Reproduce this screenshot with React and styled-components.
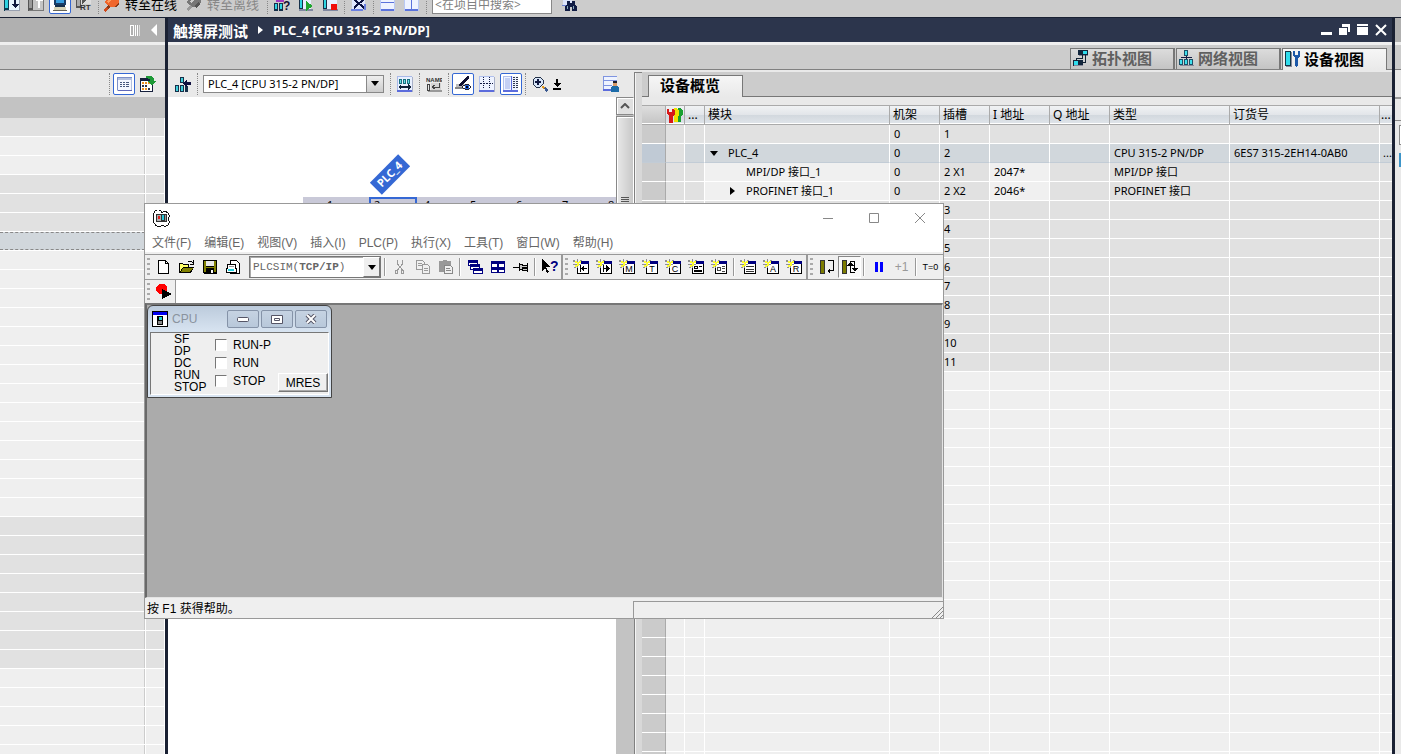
import React from 'react';
import styled, { createGlobalStyle, css } from 'styled-components';

// [fill, path, stroke]
const icons = {
  download: [
    ['#0a3c50', 'M0 0h5v16h-5z'], ['#2fd3e0', 'M1 0h3v13h-3z'], ['#e8f4ff', 'M5 0h10v15h-10z'],
    ['#98a0b0', 'M1 15h15v1h-15zM15 2h1v14h-1z'], ['#101840', 'M10 2h2v7h3l-4 4l-4-4h3z'],
  ],
  upload: [
    ['#555', 'M0 0h5v16h-5z'], ['#999', 'M1 0h3v13h-3z'], ['#c4c4c4', 'M5 0h10v15h-10z'],
    ['#777', 'M1 15h15v1h-15zM15 2h1v14h-1z'], ['#fff', 'M10 13h2v-7h3l-4-4l-4 4h3z'],
  ],
  monitor: [
    ['#1c3e66', 'M2 0h12v10h-12z'], ['#3aa0e0', 'M4 1h8v7h-8z'], ['#18304c', 'M3 10h10v2h-10z'],
    ['#d8d4b8', 'M2 12h12v3h-12z'], ['#66645a', 'M1 15h14v1h-14z'],
  ],
  simulate: [
    ['#555', 'M0 0h5v13h-5z'], ['#aaa', 'M1 0h3v11h-3z'], ['#ddd', 'M5 0h10v9h-10z'], ['#555', 'M6 1l5 4l-5 4z'],
  ],
  plug: [
    ['#f0662c', 'M6 0h9l1 6l-4 5h-6l-4-5z'], ['#ff9f62', 'M7 1h3l-4 6l-2-1z'], ['#8a3a18', 'M1 13l4-4l2 2l-4 4zM12 11l4-5v2l-3 4z'],
    ['#d04a1c', 'M0 14l3-3l2 2l-3 3z'],
  ],
  plugGray: [
    ['#777', 'M6 0h9l1 6l-4 5h-6l-4-5z'], ['#ccc', 'M7 3h3l-3 4l-2-1z'], ['#999', 'M1 13l4-4l2 2l-4 4z'],
    ['#555', 'M9 10l4-4l2 2l-4 4z'],
  ],
  access: [
    ['#a23ac0', 'M2 5h8v2h-8z'], ['#16304a', 'M0 8h4v8h-4zM5 8h4v8h-4z'], ['#30d6e2', 'M1 9h2v5h-2zM6 9h2v5h-2zM4 0h3v5h-3z'],
  ],
  start: [
    ['#16304a', 'M1 0h4v14h-4z'], ['#30d6e2', 'M2 0h2v13h-2z'], ['#e8efff', 'M5 0h8v15h-8z'], ['#8088a0', 'M1 14h14v2h-14z'],
    ['#20a830', 'M8 6l7 5l-7 5z'],
  ],
  stop: [
    ['#16304a', 'M1 0h4v14h-4z'], ['#30d6e2', 'M2 0h2v13h-2z'], ['#e8efff', 'M5 0h10v15h-10z'], ['#8088a0', 'M1 14h15v2h-15z'],
    ['#f00c0c', 'M9 9h6v6h-6z'],
  ],
  cross: [
    ['#dfe6ff', 'M1 0h13v14h-13z'], ['#6a7fe0', 'M0 14h12v2h-12zM13 9h2v6h-2z'], ['none', 'M3 4l10 9M13 4l-10 9', '#0a1040', 2],
  ],
  splitH: [
    ['#eef3ff', 'M1 0h14v15h-14z'], ['#5a72dc', 'M0 7h15v1h-15zM0 14h15v2h-15z'], ['#b9c9f4', 'M0 0h1v16h-1zM14 0h1v16h-1z'],
  ],
  splitV: [
    ['#eef3ff', 'M1 0h14v15h-14z'], ['#5a72dc', 'M7 0h1v15h-1zM0 14h15v2h-15z'], ['#b9c9f4', 'M0 0h1v16h-1zM14 0h1v16h-1z'],
  ],
  find: [
    ['#dce4fa', 'M2 0h9v11h-9z'], ['#6a7fd0', 'M1 10h5v1h-5z'],
    ['#101c44', 'M6 6h3v2h2v-2h3v3l2 3v4h-5v-4h-2v4h-5v-4l2-3z'], ['#8ab', 'M6 11h1v3h-1zM12 11h1v3h-1z'],
  ],
  list: [
    ['#b3c0de', 'M1 1h15v14h-15z'], ['#f4f7ff', 'M2 4h13v10h-13z'], ['#7c8fc8', 'M1 1h15v1h-15zM1 1h1v13h-1z'], ['#6068b8', 'M2 14h14v1h-14z'],
    ['#48587c', 'M4 6h2v1h-2zM7 6h2v1h-2zM10 6h3v1h-3zM4 8h2v1h-2zM7 8h2v1h-2zM10 8h3v1h-3zM4 10h2v1h-2zM7 10h2v1h-2zM10 10h3v1h-3z'],
  ],
  calendar: [
    ['#16203c', 'M0 2h13v14h-13z'], ['#fff', 'M1 5h11v10h-11z'],
    ['#f09020', 'M2 6h2v2h-2zM5 6h2v2h-2zM8 6h2v2h-2zM2 12h2v2h-2zM5 12h2v2h-2z'], ['#334', 'M2 9h2v2h-2zM5 9h2v2h-2zM8 12h2v2h-2z'],
    ['#1e9a38', 'M6 0h5l3 2v3h2l-4 5l-4-5h2v-2l-4-1z'],
  ],
  network: [
    ['#16304a', 'M5 1h4v6h-4zM0 9h4v7h-4zM5 9h4v7h-4zM10 10h3v6h-3z'], ['#40d0dc', 'M6 2h2v4h-2zM1 10h2v5h-2zM6 10h2v5h-2z'],
    ['#101040', 'M8 7l4-4v3h4v3h-4v3z'],
  ],
  fit: [
    ['#e8f0ff', 'M0 0h15v15h-15z'], ['#a9b9e8', 'M0 0h15v1h-15zM0 0h1v15h-1z'], ['#5c6cdc', 'M0 14h15v2h-15z'], ['#a8b0c8', 'M15 1h1v15h-1z'],
    ['#187080', 'M2 3h3v5h-3zM6 3h3v5h-3zM10 3h3v5h-3z'], ['#6be0e8', 'M3 4h1v3h-1zM7 4h1v3h-1zM11 4h1v3h-1z'],
    ['#102038', 'M1 11l3-3v2h7v-2l3 3l-3 3v-2h-7v2z'],
  ],
  name: [
    ['#999', 'M2 14h14v2h-14z'], ['#d4d4d4', 'M5 7h10v7h-10z'], ['none', 'M1 8h2v6h-2zM13 7v4h-6M9 9l-3 2l3 2', '#444'],
  ],
  eye: [
    ['#888', 'M0 11h12v2h-12z'], ['#bcbcbc', 'M1 8h9v3h-9z'], ['#101030', 'M12 0h2v2l-7 8h-3v-1z'],
    ['#fff', 'M7 11q5-5 9 0q-4 5-9 0z', '#223'], ['#2866d8', 'M10 9h4v4h-4z'], ['#001', 'M11 10h2v2h-2z'],
  ],
  grid: [
    ['#eef3ff', 'M0 0h15v15h-15z'], ['#b0c0ee', 'M0 0h15v1h-15zM0 0h1v15h-1z'], ['#5c6cdc', 'M0 14h15v2h-15z'], ['#a8b0c8', 'M15 1h1v15h-1z'],
    ['#101840', 'M4 1h1v1h-1zM4 3h1v1h-1zM4 5h1v1h-1zM4 9h1v1h-1zM4 11h1v1h-1zM10 1h1v1h-1zM10 3h1v1h-1zM10 5h1v1h-1zM10 9h1v1h-1zM10 11h1v1h-1zM1 7h2v1h-2zM4 7h2v1h-2zM7 7h2v1h-2zM10 7h2v1h-2zM13 7h1v1h-1z'],
  ],
  panelRight: [
    ['#eef3ff', 'M0 0h15v15h-15z'], ['#b0c0ee', 'M0 0h9v1h-9zM0 0h1v15h-1z'], ['#c4d0f4', 'M2 2h5v11h-5z'], ['#5c6cdc', 'M0 14h15v2h-15zM8 0h1v15h-1z'],
    ['#303850', 'M10 1h2v1h-2zM13 1h2v1h-2zM10 3h2v1h-2zM13 3h2v1h-2zM10 5h2v1h-2zM13 5h2v1h-2zM10 7h2v1h-2zM13 7h2v1h-2zM10 9h2v1h-2zM13 9h2v1h-2zM10 11h2v1h-2zM13 11h2v1h-2z'],
  ],
  zoomIn: [
    ['#d8e6f8', 'M4 1h4l3 3v4l-3 3h-4l-3-3v-4z', '#223048'], ['#101840', 'M5 3h2v2h2v2h-2v2h-2v-2h-2v-2h2z'],
    ['#e09820', 'M10 10h2l1 2l-2 1z'], ['#3c5a90', 'M12 12l2-1l2 3l-2 2z'],
  ],
  dropDown: [['#000', 'M4 2h2v4h3l-4 4l-4-4h3zM1 11h8v2h-8z']],
  panelUser: [
    ['#eef3ff', 'M0 0h14v13h-14z'], ['#7f94e0', 'M0 0h14v1h-14zM0 4h14v1h-14zM0 9h9v1h-9zM0 0h1v13h-1z'], ['#5c6cdc', 'M0 13h9v2h-9z'],
    ['#1b2030', 'M10 5h4v2h-4z'], ['#d89a68', 'M10 7h4v3h-4z'], ['#1c6ca8', 'M9 10h6l1 2v4h-8v-4z'],
  ],
  topology: [
    ['#12263c', 'M5 0h10v5h-10zM0 10h10v6h-10z'], ['#30dcec', 'M10 1h4v3h-4zM1 11h4v4h-4z'], ['#889', 'M6 5h9v1h-9zM1 15h9v1h-9z'],
    ['none', 'M9 5v3h-6v3M12 5v7h-3', '#123'],
  ],
  netView: [
    ['#1c5068', 'M5 0h4v6h-4zM0 9h4v6h-4zM5 9h4v6h-4zM10 9h4v6h-4z'], ['#40e0ec', 'M6 1h2v4h-2zM1 10h2v4h-2zM6 10h2v4h-2zM11 10h2v4h-2z'],
    ['#151a40', 'M7 6h1v3h-1zM2 7h11v1h-11z'], ['#889', 'M1 15h14v1h-14z'],
  ],
  device: [
    ['#123848', 'M0 0h6v15h-6z'], ['#30dcec', 'M1 1h4v13h-4z'], ['#889', 'M1 15h6v1h-6zM6 1h1v14h-1z'],
    ['#1c58a8', 'M8 0h2v4h3v-4h2v5l-2 2v7l-2 2l-1-2v-7l-2-2z'],
  ],
  wrenches: [
    ['#18a030', 'M11 1h2l3 3v3l-2 2v6h-4z'], ['#f0e000', 'M7 1h3l2 3v4l-1 1v6h-4z'],
    ['#d81818', 'M0 2h2v3h3v-3h2l1 2v3l-2 2v7h-4v-7l-2-2z'],
  ],
  plcsim: [
    ['#fff', 'M1 5a4 4 0 0 1 8-2a4 4 0 0 1 7 2a4 4 0 0 1-1 4a4 4 0 0 1-6 6a4 4 0 0 1-7-1a4 4 0 0 1-1-5a4 4 0 0 1 0-4z', '#111'],
    ['#333', 'M3 4h11v8h-11z'], ['#b0b0b0', 'M4 5h4v6h-4z'],
    ['#e02020', 'M5 6h2v3h-2z'], ['#28c8d8', 'M9 5h2v5h-2z'], ['#999', 'M12 5h1v6h-1z'],
  ],
  newDoc: [['#fff', 'M2.5 1.5h7l3 3v10h-10z', '#000'], ['none', 'M9.5 1.5v3h3', '#000']],
  open: [
    ['#000', 'M0 4h4v1h6v3h5l-3 6h-12z'], ['#ffff66', 'M1 5h3v1h5v2h-5l-3 5z'], ['#808000', 'M4 9h10l-3 4h-9z'], ['none', 'M9 3q3-2 5 1M14 1v4h-3', '#000'],
  ],
  save: [
    ['#000', 'M1 1h14v14h-13l-1-1z'], ['#808000', 'M2 2h2v11h-2zM12 2h2v11h-2zM4 8h8v1h-8z'], ['#e8e8e8', 'M4 2h8v5h-8z'], ['#fff', 'M9 11h2v3h-2z'],
  ],
  print: [
    ['#fff', 'M5.5 1.5h6l3 3v10h-9z', '#000'], ['#fff', 'M2.5 5.5h8v4h1v4h-10v-4h1z', '#000'], ['#20d0e0', 'M3 10h6v2h-6z'], ['#999', 'M4 7h5v1h-5z'],
  ],
  cut: [['none', 'M5.5 1v4l5 6M10.5 1v4l-5 6M3.5 11.5h2v3h-2zM9.5 11.5h2v3h-2z', '#999']],
  copy: [['#f0f0f0', 'M1.5 1.5h6l2 2v7h-8z', '#999'], ['#f0f0f0', 'M7.5 5.5h5l2 2v7h-7z', '#999'], ['none', 'M3 4.5h4M3 6.5h4M9 9.5h4M9 11.5h4', '#999']],
  paste: [['#999', 'M1 2h4v-1h4v1h4v11h-12z'], ['#f0f0f0', 'M6.5 6.5h6l2 2v6h-8z', '#888'], ['none', 'M8 9.5h4M8 11.5h5', '#888']],
  cascade: [['#fff', 'M1.5 1.5h9v5h-9z', '#000080'], ['#fff', 'M3.5 5.5h9v5h-9z', '#000080'], ['#fff', 'M6.5 9.5h9v5h-9z', '#000080'], ['#000080', 'M1 1h10v3h-10zM3 5h10v3h-10zM6 9h10v3h-10z']],
  tile: [['#fff', 'M1.5 2.5h13v11h-13z', '#000080'], ['#000080', 'M1 2h14v3h-14zM1 8h14v3h-14zM7 2h2v12h-2z']],
  pin: [['#c8c8c8', 'M6.5 4v8M6.5 5.5h2l2 1h4v5h-4l-2-1h-2', '#000'], ['#000', 'M0 8h7v1h-7zM9 8h5v2h-5zM14 4h1v9h-1z']],
  help: [['#000', 'M0 0l8 8h-4l3 5l-2 1l-2-5l-3 3z']],
  clampLeft: [['#7c7c00', 'M1.5 1.5h4v13h-4z', '#333'], ['none', 'M9 1.5h5.5v10h-5', '#000'], ['#000', 'M8 12l3-3v5z']],
  clampBoth: [['#7c7c00', 'M.5 1.5h4v13h-4z', '#333'], ['none', 'M8.5 14v-12h4v9M8.500 13.500h4', '#000'], ['#000', 'M5 7l3-4l4 4zM9 9h7l-3 4z']],
  pause: [['#0000ff', 'M4 3h3v10h-3zM9 3h3v10h-3z']],
  record: [['#ff0000', 'M3 0h5l3 3v4l-3 3h-5l-3-3v-4z'], ['#000', 'M6 5l10 5l-10 5z']],
  cpu: [['#fff', 'M.5 .5h15v15h-15z', '#000'], ['#0000f0', 'M1 1h14v3h-14z'], ['#000', 'M5 5h6v9h-6z'], ['#888', 'M6 10h4v3h-4z'], ['#20d8d8', 'M7 6h3v3h-3z']],
};

const Icon = ({ name, size = 16, text, children }) => (
  <svg width={size} height={size} viewBox={`0 0 ${size} ${size}`} shapeRendering="crispEdges" aria-hidden="true">
    {(icons[name] || []).map(([fill, d, stroke, width]) => (
      <path key={d} d={d} fill={fill} stroke={stroke} strokeWidth={width} />
    ))}
    {text && <IconText x={text.x} y={text.y} fontSize={text.size} fill={text.color}>{text.value}</IconText>}
    {children}
  </svg>
);

// small window with a spark in its corner, used by all "insert" tools
const InsertIcon = ({ kind }) => (
  <svg width="17" height="16" viewBox="0 0 17 16" shapeRendering="crispEdges" aria-hidden="true">
    <path d="M4.500 3.500h11v11h-11z" fill="#fff" stroke="#000" />
    <path d="M8 2h8v3h-8z" fill="#000080" />
    <path d="M0 1h2v2h-2zM4 0h1v3h-1zM7 1h2v1h-2zM0 5h8v1h-8zM1 8h2v1h-2zM4 7h1v2h-1z" fill="#909090" />
    <path d="M2 2h2v2h-2zM4 3h2v4h-2zM6 2h2v2h-2zM2 6h2v2h-2z" fill="#ffff30" />
    {kind.length === 1 && <IconLetter x="10" y="13" fontSize="9" fill="#000" textAnchor="middle">{kind}</IconLetter>}
    {kind === 'input' && <path d="M7 6h1v7h-1zM8 9l3-3v3h3v1h-3v3z" fill="#000" />}
    {kind === 'output' && <path d="M7 6h1v7h-1zM8 9h2v-3l4 3l-4 4v-3h-2z" fill="#000" />}
    {kind === 'bits' && <path d="M6.500 7.500h3v2h-3zM11 7.500h3M6.500 11.500h7v1h-7z" fill="none" stroke="#000" />}
    {kind === 'stack' && <path d="M6.500 8.500h3v3h-3zM11 7.500h3M11 9.500h3M11 12.500h3" fill="none" stroke="#444" />}
    {kind === 'lines' && <path d="M6 7.500h8M6 10.500h8M6 12.500h8" fill="none" stroke="#333" />}
  </svg>
);

const menuItems = ['文件(F)', '编辑(E)', '视图(V)', '插入(I)', 'PLC(P)', '执行(X)', '工具(T)', '窗口(W)', '帮助(H)'];
const leds = ['SF', 'DP', 'DC', 'RUN', 'STOP'];
const modes = ['RUN-P', 'RUN', 'STOP'];
const columnWidths = [24, 19, 20, 185, 50, 50, 60, 60, 120, 150, null];
const columns = ['...', '模块', '机架', '插槽', 'I 地址', 'Q 地址', '类型', '订货号', '...'];

const devices = [
  { rack: '0', slot: '1' },
  { module: 'PLC_4', arrow: 'down', level: 0, rack: '0', slot: '2', type: 'CPU 315-2 PN/DP', order: '6ES7 315-2EH14-0AB0', more: '...', selected: true },
  { module: 'MPI/DP 接口_1', level: 1, rack: '0', slot: '2 X1', input: '2047*', type: 'MPI/DP 接口' },
  { module: 'PROFINET 接口_1', arrow: 'right', level: 1, rack: '0', slot: '2 X2', input: '2046*', type: 'PROFINET 接口' },
  ...['3', '4', '5', '6', '7', '8', '9', '10', '11'].map((slot) => ({ slot })),
];
const emptyRows = Array.from({ length: 21 }, (_, i) => i);
const treeRows = Array.from({ length: 34 }, (_, i) => {
  if (i === 6) return 'selected';
  return [0, 3, 4, 5].includes(i) || (i > 20 && i < 29) ? 'dark' : 'light';
});

function TopToolbar() {
  return (
    <TopBar>
      <Tool aria-label="下载"><Icon name="download" /></Tool>
      <Tool aria-label="上传"><Icon name="upload" /></Tool>
      <Tool $on aria-label="仿真"><Icon name="monitor" /></Tool>
      <Tool aria-label="运行系统">
        <Icon name="simulate" text={{ x: 4, y: 15, size: 8, color: '#333', value: 'RT' }} />
      </Tool>
      <Dots />
      <TextTool><Icon name="plug" />转至在线</TextTool>
      <TextTool disabled><Icon name="plugGray" />转至离线</TextTool>
      <Dots />
      <Tool aria-label="可访问的设备">
        <Icon name="access" text={{ x: 9, y: 15, size: 12, color: '#101030', value: '?' }} />
      </Tool>
      <Tool aria-label="启动 CPU"><Icon name="start" /></Tool>
      <Tool aria-label="停止 CPU"><Icon name="stop" /></Tool>
      <Dots />
      <Tool aria-label="交叉引用"><Icon name="cross" /></Tool>
      <Dots />
      <Tool aria-label="水平拆分"><Icon name="splitH" /></Tool>
      <Tool aria-label="垂直拆分"><Icon name="splitV" /></Tool>
      <Dots />
      <Search aria-label="搜索" placeholder="<在项目中搜索>" />
      <Tool aria-label="查找"><Icon name="find" /></Tool>
    </TopBar>
  );
}

function ProjectPanel() {
  return (
    <Project>
      <ProjectHeader>
        <svg width="11" height="11" viewBox="0 0 11 11" shapeRendering="crispEdges" aria-hidden="true">
          <path d="M.5 .5h3v10h-3zM5.500 0v11M7.500 0v11" fill="none" stroke="#fff" />
          <path d="M9 0h1v11h-1z" fill="#ddd" />
        </svg>
        <Collapse aria-label="折叠">
          <svg width="6" height="12" viewBox="0 0 6 12" aria-hidden="true"><path d="M6 0v12l-6-6z" fill="#fff" /></svg>
        </Collapse>
      </ProjectHeader>
      <Strip />
      <Toolbar $end>
        <Dots />
        <Tool $on aria-label="详细列表"><Icon name="list" /></Tool>
        <Tool aria-label="转到"><Icon name="calendar" /></Tool>
      </Toolbar>
      <TreeHead />
      <Tree>
        {treeRows.map((kind, i) => (
          <TreeRow key={i} $kind={kind}><span /><span /></TreeRow>
        ))}
      </Tree>
    </Project>
  );
}

function DeviceEditor() {
  return (
    <Editor>
      <Toolbar>
        <Tool aria-label="网络"><Icon name="network" /></Tool>
        <Dots />
        <DeviceCombo>
          <select aria-label="设备"><option>PLC_4 [CPU 315-2 PN/DP]</option></select>
          <ComboArrow><Arrow /></ComboArrow>
        </DeviceCombo>
        <Dots />
        <Tool aria-label="适合宽度"><Icon name="fit" /></Tool>
        <Dots />
        <Tool aria-label="名称">
          <Icon name="name"><IconText x="0" y="6" fontSize="6" fill="#333">NAME</IconText></Icon>
        </Tool>
        <Dots />
        <Tool $on aria-label="显示标签"><Icon name="eye" /></Tool>
        <Tool aria-label="网格"><Icon name="grid" /></Tool>
        <Tool $on aria-label="设备概览"><Icon name="panelRight" /></Tool>
        <Dots />
        <Tool aria-label="放大"><Icon name="zoomIn" /></Tool>
        <SmallTool aria-label="缩放"><Icon name="dropDown" size={14} /></SmallTool>
        <EndTool aria-label="保存窗口设置"><Icon name="panelUser" /></EndTool>
      </Toolbar>
      <CanvasRow>
        <Canvas>
          <DeviceTag>PLC_4</DeviceTag>
          <Rack>
            <Slot $wide>1</Slot>
            <Slot $selected>2</Slot>
            {['4', '5', '6', '7', '8'].map((n) => <Slot key={n}>{n}</Slot>)}
          </Rack>
        </Canvas>
        <Scroll>
          <ScrollButton aria-label="向上滚动">
            <svg width="10" height="6" viewBox="0 0 10 6" aria-hidden="true"><path d="M1 5l4-4l4 4" fill="none" stroke="#555" strokeWidth="2" /></svg>
          </ScrollButton>
          <Thumb><i /><i /><i /><i /></Thumb>
        </Scroll>
      </CanvasRow>
    </Editor>
  );
}

function DeviceOverview() {
  return (
    <Overview>
      <OverviewTabs><OverviewTab>设备概览</OverviewTab></OverviewTabs>
      <TableArea>
        <Table>
          <colgroup>
            {columnWidths.map((width, i) => <col key={i} style={width ? { width } : undefined} />)}
          </colgroup>
          <thead>
            <tr>
              <th aria-label="行" />
              <IconHead><Icon name="wrenches" /></IconHead>
              {columns.map((name, i) => <th key={i}>{name}</th>)}
            </tr>
          </thead>
          <tbody>
            {devices.map((d) => (
              <Row key={d.slot} $selected={d.selected}>
                <td /><td /><td />
                <ModuleCell $light={d.level === 1}>
                  {d.module && (
                    <Module $level={d.level}>
                      <ArrowBox>{d.arrow && <Arrow $right={d.arrow === 'right'} />}</ArrowBox>
                      {d.module}
                    </Module>
                  )}
                </ModuleCell>
                <td>{d.rack}</td>
                <td>{d.slot}</td>
                <ModuleCell $light={d.level === 1}>{d.input}</ModuleCell>
                <td />
                <td>{d.type}</td>
                <td>{d.order}</td>
                <td>{d.more}</td>
              </Row>
            ))}
            {emptyRows.map((i) => (
              <Row key={i} $empty>{columnWidths.map((_, c) => <td key={c} />)}</Row>
            ))}
          </tbody>
        </Table>
      </TableArea>
    </Overview>
  );
}

function CpuWindow() {
  return (
    <CpuFrame>
      <CpuTitle>
        <Icon name="cpu" />
        <span>CPU</span>
        <GlassButton aria-label="最小化">
          <svg width="12" height="5" viewBox="0 0 12 5" aria-hidden="true"><rect x=".5" y=".5" width="11" height="4" rx="1" fill="#fff" stroke="#556" /></svg>
        </GlassButton>
        <GlassButton aria-label="最大化">
          <svg width="12" height="9" viewBox="0 0 12 9" aria-hidden="true"><path d="M.5 .5h11v8h-11zM3.500 3.500h5v2h-5z" fill="#fff" stroke="#556" /></svg>
        </GlassButton>
        <GlassButton aria-label="关闭">
          <svg width="12" height="10" viewBox="0 0 12 10" aria-hidden="true">
            <path d="M2 1l8 8M10 1l-8 8" stroke="#556" strokeWidth="4" />
            <path d="M2 1l8 8M10 1l-8 8" stroke="#fff" strokeWidth="2" />
          </svg>
        </GlassButton>
      </CpuTitle>
      <CpuBody>
        <Leds>{leds.map((led) => <li key={led}>{led}</li>)}</Leds>
        <Modes>
          {modes.map((mode) => <label key={mode}><input type="checkbox" />{mode}</label>)}
        </Modes>
        <Mres>MRES</Mres>
      </CpuBody>
    </CpuFrame>
  );
}

function Simulator() {
  return (
    <SimWindow>
      <SimTitle>
        <Icon name="plcsim" size={17} />
        <CaptionButtons>
          <button aria-label="最小化"><svg width="10" height="10" viewBox="0 0 10 10"><path d="M0 5.500h10" stroke="#888" /></svg></button>
          <button aria-label="最大化"><svg width="10" height="10" viewBox="0 0 10 10"><path d="M.5 .5h9v9h-9z" fill="none" stroke="#888" /></svg></button>
          <button aria-label="关闭"><svg width="10" height="10" viewBox="0 0 10 10"><path d="M0 0l10 10M10 0l-10 10" stroke="#888" /></svg></button>
        </CaptionButtons>
      </SimTitle>
      <Menu>{menuItems.map((item) => <button key={item}>{item}</button>)}</Menu>
      <SimBar>
        <BarGroup>
          <Grip />
          <SimTool aria-label="新建"><Icon name="newDoc" /></SimTool>
          <SimTool aria-label="打开"><Icon name="open" /></SimTool>
          <SimTool aria-label="保存"><Icon name="save" /></SimTool>
          <SimTool aria-label="打印"><Icon name="print" /></SimTool>
          <SimCombo>
            <select aria-label="接口"><option>PLCSIM(TCP/IP)</option></select>
            <SimComboText aria-hidden="true">PLCSIM(<b>TCP/IP</b>)</SimComboText>
            <SimComboArrow><Arrow /></SimComboArrow>
          </SimCombo>
          <Line />
          <SimTool disabled aria-label="剪切"><Icon name="cut" /></SimTool>
          <SimTool disabled aria-label="复制"><Icon name="copy" /></SimTool>
          <SimTool disabled aria-label="粘贴"><Icon name="paste" /></SimTool>
          <Line />
          <SimTool aria-label="层叠"><Icon name="cascade" /></SimTool>
          <SimTool aria-label="平铺"><Icon name="tile" /></SimTool>
          <SimTool aria-label="置顶"><Icon name="pin" /></SimTool>
          <Line />
          <SimTool aria-label="帮助">
            <Icon name="help" text={{ x: 8, y: 12, size: 14, color: '#000080', value: '?' }} />
          </SimTool>
        </BarGroup>
        <BarGroup>
          <Grip />
          {['input', 'output', 'M', 'T', 'C', 'bits', 'stack'].map((kind) => (
            <SimTool key={kind} aria-label={kind}><InsertIcon kind={kind} /></SimTool>
          ))}
          <Line />
          {['lines', 'A', 'R'].map((kind) => (
            <SimTool key={kind} aria-label={kind}><InsertIcon kind={kind} /></SimTool>
          ))}
        </BarGroup>
        <BarGroup $last>
          <Grip />
          <SimTool aria-label="单次扫描"><Icon name="clampLeft" /></SimTool>
          <SimTool $pressed aria-label="连续扫描"><Icon name="clampBoth" /></SimTool>
          <Line />
          <SimTool aria-label="暂停"><Icon name="pause" /></SimTool>
          <SimTool disabled>+1</SimTool>
          <Line />
          <SimTool $small>T=0</SimTool>
        </BarGroup>
      </SimBar>
      <RecordBar>
        <RecordGroup>
          <Grip />
          <SimTool aria-label="记录"><Icon name="record" /></SimTool>
        </RecordGroup>
      </RecordBar>
      <Mdi><CpuWindow /></Mdi>
      <Status>
        <span>按 F1 获得帮助。</span>
        <StatusPane>
          <svg width="12" height="12" viewBox="0 0 12 12" aria-hidden="true"><path d="M1 12l11-11M5 12l7-7M9 12l3-3" stroke="#888" /></svg>
        </StatusPane>
      </Status>
    </SimWindow>
  );
}

export default function App() {
  return (
    <>
      <GlobalStyle />
      <Page>
        <TopToolbar />
        <Workspace>
          <ProjectPanel />
          <Divider />
          <Main>
            <TitleBar>
              <TitleCjk>触摸屏测试</TitleCjk>
              <svg width="5" height="8" viewBox="0 0 5 8" aria-hidden="true"><path d="M0 0l5 4l-5 4z" fill="#fff" /></svg>
              <span>PLC_4 [CPU 315-2 PN/DP]</span>
              <WindowButtons>
                <button aria-label="最小化"><svg width="12" height="12" viewBox="0 0 12 12"><path d="M0 8h11v3h-11z" fill="#fff" /></svg></button>
                <button aria-label="浮动"><svg width="12" height="12" viewBox="0 0 12 12"><path d="M0 4h8v7h-8zM3 0h8v8h-2v-5h-6z" fill="#fff" /></svg></button>
                <button aria-label="最大化"><svg width="12" height="12" viewBox="0 0 12 12"><path d="M0 0h11v2h-11zM0 3h11v8h-11z" fill="#fff" /></svg></button>
                <button aria-label="关闭"><svg width="12" height="12" viewBox="0 0 12 12"><path d="M1 1l10 10M11 1l-10 10" stroke="#fff" strokeWidth="2" /></svg></button>
              </WindowButtons>
            </TitleBar>
            <Strip>
              <ViewTab><Icon name="topology" />拓扑视图</ViewTab>
              <ViewTab><Icon name="netView" />网络视图</ViewTab>
              <ViewTab $active><Icon name="device" />设备视图</ViewTab>
            </Strip>
            <Panes>
              <DeviceEditor />
              <PaneDivider />
              <DeviceOverview />
            </Panes>
          </Main>
          <Divider />
          <SidePanel>
            <SideHead />
            <Strip />
            <SideTool />
            <SideTitle />
            <SideBox />
            <SideMark />
          </SidePanel>
        </Workspace>
        <Simulator />
      </Page>
    </>
  );
}

const GlobalStyle = createGlobalStyle`
  * {
    box-sizing: border-box;
  }

  body {
    margin: 0;
    font-family: 'Noto Sans', 'Noto Sans CJK SC', sans-serif;
    font-size: 11px;
    color: #000;
  }

  button, select, input {
    margin: 0;
    padding: 0;
    font: inherit;
    color: inherit;
    border-radius: 0;
  }

  button {
    background: none;
    border: none;
  }

  svg {
    display: block;
    flex: none;
  }
`;

const IconText = styled.text`
  font-family: 'Liberation Sans', sans-serif;
  font-weight: bold;
`;

const IconLetter = styled.text`
  font-family: 'Liberation Sans', sans-serif;
`;

const Page = styled.div`
  position: relative;
  display: flex;
  flex-direction: column;
  height: 100vh;
  overflow: hidden;
  background: #ccc;
`;

const TopBar = styled.div`
  flex: none;
  display: flex;
  align-items: flex-end;
  height: 17px;
  padding-bottom: 3px;
  overflow: hidden;
  background: #ccc;
`;

const Tool = styled.button`
  flex: none;
  display: flex;
  align-items: center;
  justify-content: center;
  width: 22px;
  height: 22px;
  margin: 0 1px;
  border: 1px solid transparent;

  ${({ $on }) => $on && css`
    border-color: #3568d4;
    border-radius: 2px;
    background: #fff;
  `}
`;

const SmallTool = styled(Tool)`
  width: 14px;
  margin: 0;
`;

const EndTool = styled(Tool)`
  margin-left: auto;
  margin-right: 9px;
`;

const TextTool = styled.button`
  flex: none;
  display: flex;
  align-items: center;
  gap: 6px;
  height: 20px;
  padding: 0 6px 0 2px;
  font-size: 13px;
  line-height: 20px;

  &:disabled {
    color: #888;
  }
`;

const Dots = styled.span`
  flex: none;
  height: 22px;
  margin: 0 2px;
  border-left: 1px dotted #888;
`;

const Search = styled.input`
  width: 120px;
  height: 20px;
  margin: 0 5px 0 3px;
  padding: 0 2px;
  border: 1px solid #888;
  font-size: 12px;
  background: #fff;

  &::placeholder {
    color: #808080;
    opacity: 1;
  }
`;

const Workspace = styled.div`
  flex: 1;
  min-height: 0;
  display: flex;
  border-top: 1px solid #1a2133;
`;

const Divider = styled.div`
  flex: none;
  width: 3px;
  background: #1a2133;
`;

const Project = styled.div`
  flex: none;
  width: 165px;
  display: flex;
  flex-direction: column;
  background: #efefef;
`;

const ProjectHeader = styled.div`
  flex: none;
  display: flex;
  align-items: center;
  justify-content: flex-end;
  gap: 10px;
  height: 24px;
  padding-right: 8px;
  background: #b0b0b0;
`;

const Collapse = styled.button`
  display: flex;
`;

const Strip = styled.div`
  flex: none;
  display: flex;
  align-items: flex-end;
  justify-content: flex-end;
  gap: 1px;
  height: 28px;
  padding-right: 5px;
  border-top: 3px solid #efefef;
  border-bottom: 1px solid #808080;
  background: #ccc;
`;

const Toolbar = styled.div`
  flex: none;
  display: flex;
  align-items: center;
  height: 27px;
  padding: 0 ${({ $end }) => ($end ? 5 : 3)}px;
  background: #e9e9e9;
  justify-content: ${({ $end }) => ($end ? 'flex-end' : 'flex-start')};
`;

const TreeHead = styled.div`
  flex: none;
  height: 21px;
  background: #c3c3c3;
`;

const Tree = styled.div`
  flex: 1;
  min-height: 0;
  overflow: hidden;
  padding-right: 1px;
  background: #fff;
`;

const rowColors = { dark: '#e1e1e1', light: '#efefef', selected: '#d1d7dc' };

const TreeRow = styled.div`
  display: flex;
  gap: 1px;
  height: 19px;
  border-bottom: 1px solid #fff;

  span {
    background: ${({ $kind }) => rowColors[$kind]};
  }

  span:first-child {
    flex: 1;
    border-right: 1px solid #ccc;
    ${({ $kind }) => $kind === 'selected' && css`
      border-top: 1px dashed #888;
      border-bottom: 1px dashed #888;
    `}
  }

  span:last-child {
    width: 18px;
  }
`;

const Main = styled.div`
  flex: 1;
  min-width: 0;
  display: flex;
  flex-direction: column;
`;

const TitleBar = styled.div`
  flex: none;
  display: flex;
  align-items: center;
  gap: 10px;
  height: 24px;
  padding: 0 5px;
  background: #2c354c;
  color: #fff;
  font-size: 13px;
  font-weight: bold;
`;

const TitleCjk = styled.span`
  font-size: 15px;
`;

const WindowButtons = styled.div`
  display: flex;
  gap: 6px;
  margin-left: auto;

  button {
    display: flex;
  }
`;

const ViewTab = styled.button`
  display: flex;
  align-items: center;
  gap: 3px;
  width: 105px;
  height: 21px;
  padding: 0 2px 2px;
  border: 1px solid #777;
  border-right-width: 2px;
  border-bottom: none;
  background: linear-gradient(#dcdcdc, #c4c4c4);
  color: #606060;
  font-size: 15px;
  line-height: 18px;
  font-weight: bold;

  ${({ $active }) => $active && css`
    height: 22px;
    margin-bottom: -1px;
    border-right-width: 1px;
    background: linear-gradient(#f6f6f6, #e9e9e9);
    color: #000;
  `}
`;

const Panes = styled.div`
  flex: 1;
  min-height: 0;
  display: flex;
  background: #e9e9e9;
`;

const Editor = styled.div`
  flex: 0 0 466px;
  display: flex;
  flex-direction: column;
`;

const DeviceCombo = styled.div`
  display: grid;
  grid-template-columns: 1fr 17px;
  width: 181px;
  height: 18px;
  margin: 0 4px 0 3px;
  border: 1px solid #888;
  background: #fff;

  select {
    grid-area: 1 / 1 / 2 / 3;
    appearance: none;
    padding-left: 4px;
    border: none;
    background: none;
  }
`;

const ComboArrow = styled.span`
  grid-area: 1 / 2;
  display: flex;
  align-items: center;
  justify-content: center;
  border-left: 1px solid #888;
  background: linear-gradient(#eee, #ccc);
  pointer-events: none;
`;

const Arrow = styled.i`
  border: 4px solid transparent;
  ${({ $right }) => ($right ? css`
    border-left: 5px solid #000;
    border-right: none;
  ` : css`
    border-top: 5px solid #000;
    border-bottom: none;
  `)}
`;

const CanvasRow = styled.div`
  flex: 1;
  min-height: 0;
  display: flex;
`;

const Canvas = styled.div`
  position: relative;
  flex: 1;
  overflow: hidden;
  background: #fff;
`;

const DeviceTag = styled.div`
  position: absolute;
  left: 202px;
  top: 69px;
  width: 40px;
  height: 17px;
  transform: rotate(-45deg);
  background: #3568d4;
  color: #fff;
  font-weight: bold;
  line-height: 16px;
  text-align: center;
`;

const Rack = styled.div`
  position: absolute;
  left: 135px;
  top: 100px;
  display: flex;
  height: 80px;
  background: #c9c9d8;
`;

const Slot = styled.div`
  width: ${({ $wide }) => ($wide ? 66 : 46)}px;
  padding-left: ${({ $wide }) => ($wide ? 24 : 7)}px;
  line-height: 16px;

  ${({ $selected }) => $selected && css`
    width: 48px;
    padding-left: 3px;
    border: 2px solid #3568d4;
    line-height: 12px;
  `}
`;

const Scroll = styled.div`
  flex: none;
  display: flex;
  flex-direction: column;
  gap: 1px;
  width: 18px;
  background: #c3c3c3;
`;

const ScrollButton = styled.button`
  display: flex;
  align-items: center;
  justify-content: center;
  height: 18px;
  border: 1px solid #888;
  border-right-color: #fff;
  box-shadow: inset 1px 1px #fff;
  background: #e0e0e0;
`;

const Thumb = styled.div`
  display: flex;
  flex-direction: column;
  align-items: center;
  justify-content: center;
  gap: 1px;
  height: 168px;
  border: 1px solid #888;
  border-right-color: #fff;
  box-shadow: inset 1px 1px #fff;
  background: linear-gradient(90deg, #e8e8e8, #c8c8c8);

  i {
    width: 8px;
    height: 1px;
    background: #555;
  }
`;

const PaneDivider = styled.div`
  flex: none;
  width: 8px;
  margin-top: 2px;
  border-left: 1px solid #808080;
  border-top: 1px solid #808080;
  box-shadow: inset 1px 0 #f4f4f4;
  background: #d8d8d8;
`;

const Overview = styled.div`
  flex: 1;
  min-width: 0;
  display: flex;
  flex-direction: column;
`;

const OverviewTabs = styled.div`
  flex: none;
  display: flex;
  align-items: flex-end;
  height: 27px;
  padding-left: 6px;
  border-top: 2px solid #e9e9e9;
  border-bottom: 1px solid #777;
  background: #ccc;
`;

const OverviewTab = styled.button`
  width: 95px;
  height: 22px;
  margin-bottom: -1px;
  padding: 0 11px 3px 0;
  border: 1px solid #777;
  border-bottom: none;
  background: linear-gradient(#f6f6f6, #e9e9e9);
  font-size: 15px;
  line-height: 18px;
  font-weight: bold;
`;

const TableArea = styled.div`
  flex: 1;
  min-height: 0;
  padding-top: 8px;
  overflow: hidden;
`;

const Table = styled.table`
  width: 100%;
  table-layout: fixed;
  border-collapse: separate;
  border-spacing: 0;

  th {
    height: 20px;
    padding: 0 0 0 3px;
    border-top: 1px solid #aaa;
    border-bottom: 1px solid #aaa;
    border-right: 1px solid #aaa;
    box-shadow: inset 0 -1px #fff;
    background: linear-gradient(#f0f2f4, #e2e5e9 50%, #d2d8de 51%, #e0e5ea);
    font-size: 12px;
    line-height: 16px;
    font-weight: normal;
    text-align: left;
    white-space: nowrap;
  }

  th:first-child {
    background: linear-gradient(#dedede, #c4c4c4);
  }

  th:last-child {
    padding-left: 1px;
    border-right: none;
  }
`;

const IconHead = styled.th`
  && {
    padding: 0 0 0 1px;
  }
`;

const Row = styled.tr`
  td {
    height: 19px;
    padding: 0 0 0 4px;
    border-right: 1px solid #fff;
    border-bottom: 1px solid ${({ $selected }) => ($selected ? '#c2ccd6' : '#fff')};
    background: ${({ $selected, $empty }) => ($selected && '#d1d7dc') || ($empty ? '#efefef' : '#e1e1e1')};
    line-height: 16px;
    white-space: nowrap;
  }

  td:first-child {
    border-right-color: #aaa;
    background: ${({ $selected }) => ($selected ? '#c0cad5' : '#cbcbcb')};
  }

  td:nth-child(2) {
    background: ${({ $empty }) => ($empty ? '#efefef' : '#e1e1e1')};
  }

  td:last-child {
    padding-left: 3px;
    border-right: none;
  }
`;

const ModuleCell = styled.td`
  ${({ $light }) => $light && css`
    && {
      background: #f0f0f0;
    }
  `}
`;

const Module = styled.span`
  display: flex;
  align-items: center;
  padding-left: ${({ $level }) => $level * 18}px;
`;

const ArrowBox = styled.span`
  display: flex;
  justify-content: center;
  width: 10px;
  margin-right: 9px;
`;

const SidePanel = styled.div`
  flex: none;
  width: 6px;
  display: flex;
  flex-direction: column;
  background: #e9e9e9;
`;

const SideHead = styled.div`
  height: 24px;
  background: #b0b0b0;
`;

const SideTool = styled.div`
  height: 29px;
  border-bottom: 2px solid #999;
`;

const SideTitle = styled.div`
  height: 22px;
  border-bottom: 1px solid #888;
`;

const SideBox = styled.div`
  height: 20px;
  margin: 4px 0 8px 4px;
  border: 1px solid #888;
  border-right: none;
  background: #fff;
`;

const SideMark = styled.div`
  height: 14px;
  margin-left: 4px;
  background: #3c94c8;
`;

/* simulator window */

const SimWindow = styled.div`
  position: absolute;
  left: 144px;
  top: 203px;
  width: 800px;
  height: 416px;
  display: flex;
  flex-direction: column;
  border: 1px solid #999;
  background: #fff;
  font-family: 'Liberation Sans', 'Noto Sans CJK SC', sans-serif;
  font-size: 12px;
`;

const SimTitle = styled.div`
  flex: none;
  display: flex;
  align-items: center;
  height: 28px;
  padding-left: 8px;
`;

const CaptionButtons = styled.div`
  display: flex;
  margin-left: auto;

  button {
    display: flex;
    align-items: center;
    justify-content: center;
    width: 46px;
    height: 28px;
  }
`;

const Menu = styled.div`
  flex: none;
  display: flex;
  gap: 13px;
  height: 22px;
  padding: 3px 7px 0;
  border-bottom: 2px solid #efefef;
  color: #666;
  line-height: 17px;
`;

const SimBar = styled.div`
  flex: none;
  display: flex;
  height: 26px;
  border-top: 1px solid #999;
  border-bottom: 1px solid #999;
  background: #efefef;
`;

const BarGroup = styled.div`
  display: flex;
  align-items: center;
  border-right: ${({ $last }) => ($last ? 'none' : '2px solid #999')};
`;

const Grip = styled.span`
  width: 3px;
  height: 18px;
  margin: 0 2px 0 2px;
  background: repeating-linear-gradient(#aaa 0 2px, #efefef 2px 5px);
`;

const SimTool = styled.button`
  display: flex;
  align-items: center;
  justify-content: center;
  width: 23px;
  height: 22px;
  white-space: nowrap;
  font-size: ${({ $small }) => ($small ? 9 : 12)}px;

  &:disabled {
    color: #999;
  }

  ${({ $pressed }) => $pressed && css`
    border: 1px solid #888;
    border-right-color: #fff;
    border-bottom-color: #fff;
    background: #f8f8f8;
  `}
`;

const Line = styled.span`
  width: 2px;
  height: 18px;
  margin: 0 2px;
  border-left: 1px solid #999;
  background: #fff;
`;

const SimCombo = styled.div`
  display: grid;
  grid-template-columns: 1fr 17px;
  width: 132px;
  height: 22px;
  margin: 0 1px 0 5px;
  border: 1px solid #777;
  box-shadow: inset 1px 1px #aaa;
  background: #fff;
  font-family: 'Liberation Mono', monospace;
  font-size: 11px;
  color: #666;

  select {
    grid-area: 1 / 1 / 2 / 3;
    appearance: none;
    border: none;
    background: none;
    color: transparent;
  }
`;

const SimComboText = styled.span`
  grid-area: 1 / 1;
  padding-left: 3px;
  line-height: 20px;
  pointer-events: none;
`;

const SimComboArrow = styled.span`
  grid-area: 1 / 2;
  display: flex;
  align-items: center;
  justify-content: center;
  border: 1px solid #fff;
  border-right-color: #777;
  border-bottom-color: #777;
  background: #efefef;
  color: #000;
  pointer-events: none;
`;

const RecordBar = styled.div`
  flex: none;
  height: 23px;
  display: flex;
`;

const RecordGroup = styled.div`
  display: flex;
  align-items: center;
  width: 31px;
  border-right: 1px solid #999;
  background: #efefef;
`;

const Mdi = styled.div`
  flex: 1;
  min-height: 0;
  border: 2px solid #777;
  border-left-color: #696969;
  border-right: 1px solid #e3e3e3;
  border-bottom: 1px solid #e3e3e3;
  background: #ababab;
`;

const CpuFrame = styled.div`
  width: 185px;
  padding: 0 2px 2px;
  border: 1px solid #444;
  border-radius: 6px 6px 0 0;
  background: linear-gradient(#bccbdc, #d8e4f1 26px);
`;

const CpuTitle = styled.div`
  display: flex;
  align-items: center;
  gap: 2px;
  height: 26px;
  padding: 0 2px;
  color: #8a939e;

  span {
    flex: 1;
    padding-left: 2px;
  }
`;

const GlassButton = styled.button`
  display: flex;
  align-items: center;
  justify-content: center;
  width: 32px;
  height: 18px;
  border: 1px solid #8593a8;
  border-radius: 2px;
  background: linear-gradient(#c6d3e2, #b8c8da);
`;

const CpuBody = styled.div`
  display: flex;
  height: 63px;
  border: 1px solid #777;
  border-right-color: #fff;
  border-bottom-color: #fff;
  background: #efefef;
`;

const Leds = styled.ul`
  width: 64px;
  margin: 0;
  padding: 0 0 0 23px;
  list-style: none;
  line-height: 12px;
`;

const Modes = styled.div`
  display: flex;
  flex-direction: column;
  padding-top: 3px;

  label {
    display: flex;
    align-items: center;
    gap: 6px;
    height: 18px;
  }

  input {
    appearance: none;
    width: 12px;
    height: 12px;
    border: 1px solid #777;
    border-right-color: #fff;
    border-bottom-color: #fff;
    background: #fff;
  }
`;

const Mres = styled.button`
  align-self: flex-end;
  width: 50px;
  height: 19px;
  margin: 0 0 2px auto;
  border: 1px solid #fff;
  border-right-color: #777;
  border-bottom-color: #777;
  box-shadow: inset -1px -1px #aaa;
  background: #efefef;
`;

const Status = styled.div`
  flex: none;
  display: flex;
  height: 20px;
  padding: 3px 0 0 2px;
  background: #efefef;
  line-height: 17px;
`;

const StatusPane = styled.div`
  display: flex;
  align-items: flex-end;
  justify-content: flex-end;
  width: 310px;
  margin-left: auto;
  border-top: 1px solid #999;
  border-left: 1px solid #999;
`;
